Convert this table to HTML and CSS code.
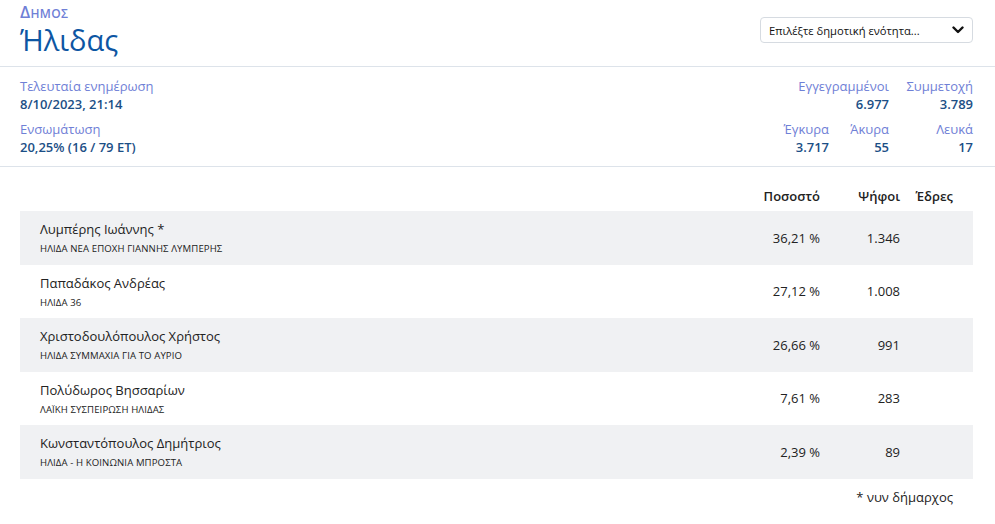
FILE: index.html
```html
<!DOCTYPE html>
<html lang="el">
<head>
<meta charset="utf-8">
<link rel="stylesheet" href="styles.css">
</head>
<body>
<header class="top">
  <div class="title-block">
    <div class="kicker">Δημος</div>
    <h1 class="title">Ήλιδας</h1>
  </div>
  <div class="select">
    <span>Επιλέξτε δημοτική ενότητα...</span>
    <svg class="chev" width="12" height="8" viewBox="0 0 12 8"><path d="M1.5 1.5 L6 6 L10.5 1.5" fill="none" stroke="#111" stroke-width="2.4" stroke-linecap="round" stroke-linejoin="round"/></svg>
  </div>
</header>
<section class="stats">
  <div class="stats-left">
    <div class="stat"><div class="lbl">Τελευταία ενημέρωση</div><div class="val">8/10/2023, 21:14</div></div>
    <div class="stat"><div class="lbl">Ενσωμάτωση</div><div class="val">20,25% (16 / 79 ET)</div></div>
  </div>
  <div class="stats-right">
    <div class="stat span2"><div class="lbl">Εγγεγραμμένοι</div><div class="val">6.977</div></div>
    <div class="stat"><div class="lbl">Συμμετοχή</div><div class="val">3.789</div></div>
    <div class="stat"><div class="lbl">Έγκυρα</div><div class="val">3.717</div></div>
    <div class="stat"><div class="lbl">Άκυρα</div><div class="val">55</div></div>
    <div class="stat"><div class="lbl">Λευκά</div><div class="val">17</div></div>
  </div>
</section>
<section class="results">
  <div class="row head">
    <div></div>
    <div class="num">Ποσοστό</div>
    <div class="num">Ψήφοι</div>
    <div class="num">Έδρες</div>
  </div>
  <div class="row item shade">
    <div><div class="name">Λυμπέρης Ιωάννης *</div><div class="party">ΗΛΙΔΑ ΝΕΑ ΕΠΟΧΗ ΓΙΑΝΝΗΣ ΛΥΜΠΕΡΗΣ</div></div>
    <div class="num">36,21 %</div><div class="num">1.346</div><div class="num"></div>
  </div>
  <div class="row item">
    <div><div class="name">Παπαδάκος Ανδρέας</div><div class="party">ΗΛΙΔΑ 36</div></div>
    <div class="num">27,12 %</div><div class="num">1.008</div><div class="num"></div>
  </div>
  <div class="row item shade">
    <div><div class="name">Χριστοδουλόπουλος Χρήστος</div><div class="party">ΗΛΙΔΑ ΣΥΜΜΑΧΙΑ ΓΙΑ ΤΟ ΑΥΡΙΟ</div></div>
    <div class="num">26,66 %</div><div class="num">991</div><div class="num"></div>
  </div>
  <div class="row item">
    <div><div class="name">Πολύδωρος Βησσαρίων</div><div class="party">ΛΑΪΚΗ ΣΥΣΠΕΙΡΩΣΗ ΗΛΙΔΑΣ</div></div>
    <div class="num">7,61 %</div><div class="num">283</div><div class="num"></div>
  </div>
  <div class="row item shade">
    <div><div class="name">Κωνσταντόπουλος Δημήτριος</div><div class="party">ΗΛΙΔΑ - Η ΚΟΙΝΩΝΙΑ ΜΠΡΟΣΤΑ</div></div>
    <div class="num">2,39 %</div><div class="num">89</div><div class="num"></div>
  </div>
  <div class="note">* νυν δήμαρχος</div>
</section>
</body>
</html>
```
FILE: styles.css
```css
* { box-sizing: border-box; }
body {
  margin: 0;
  font-family: "Open Sans", "Noto Sans", sans-serif;
  color: #222;
  background: #fff;
  font-size: 13px;
}
.top {
  display: flex;
  justify-content: space-between;
  align-items: flex-start;
  padding: 1px 22px 10px 20px;
  border-bottom: 1px solid #dde3ea;
}
.kicker {
  font-variant: small-caps;
  font-size: 16.5px;
  font-weight: 600;
  color: #6f80d6;
  line-height: 22px;
  letter-spacing: 0.3px;
}
.title {
  margin: 0;
  font-size: 29px;
  font-weight: 400;
  line-height: 33px;
  color: #0d56a3;
}
.select {
  margin-top: 16px;
  width: 213px;
  height: 26px;
  border: 1px solid #d6dbe1;
  border-radius: 4px;
  display: flex;
  align-items: center;
  justify-content: space-between;
  padding: 0 8px 0 8px;
  font-size: 11.2px;
  color: #111;
}
.chev { display: block; }
.stats {
  display: flex;
  justify-content: space-between;
  padding: 10px 22px 10px 20px;
  border-bottom: 1px solid #dde3ea;
}
.stats-left { display: flex; flex-direction: column; gap: 7px; }
.stats-right {
  display: grid;
  grid-template-columns: auto 60px 84px;
  column-gap: 0;
  row-gap: 7px;
  text-align: right;
}
.span2 { grid-column: span 2; }
.lbl { color: #6f80d6; line-height: 18px; white-space: nowrap; }
.val { color: #1c4f86; font-weight: 600; line-height: 18px; }
.results { padding: 16px 22px 0 20px; }
.row {
  display: grid;
  grid-template-columns: 1fr 100px 80px 53px;
  padding: 0 20px;
  align-items: center;
}
.row.head {
  height: 28px;
  font-weight: 600;
  color: #222;
  padding-bottom: 3px;
}
.num { text-align: right; }
.item { height: 53.5px; padding-top: 9px; padding-bottom: 8px; }
.item .num { align-self: center; margin-top: -1px; }
.shade { background: #f0f1f3; }
.name { line-height: 18px; color: #222; }
.party { font-size: 9.6px; line-height: 14px; margin-top: 4px; color: #222; letter-spacing: 0.1px; }
.note { text-align: right; padding: 9px 20px 0 0; line-height: 18px; }
```
